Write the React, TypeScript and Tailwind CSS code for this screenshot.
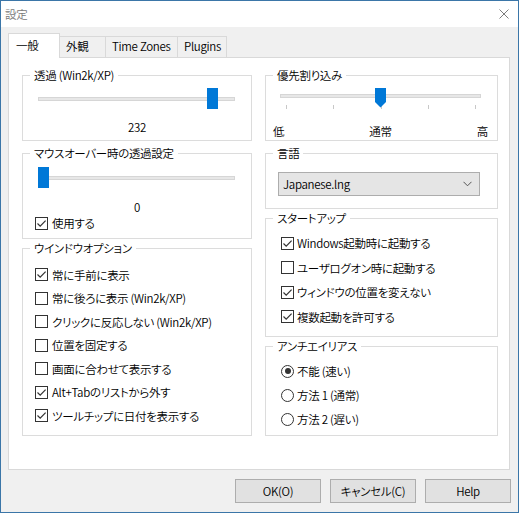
import type { ReactNode } from 'react'

const TABS = [
  { label: '一般', width: 'w-[52px]', active: true },
  { label: '外観', width: 'w-[46px]', active: false },
  { label: 'Time Zones', width: 'w-[72px]', active: false },
  { label: 'Plugins', width: 'w-[49px]', active: false },
]

const WINDOW_OPTIONS = [
  { label: '常に手前に表示', checked: true },
  { label: '常に後ろに表示 (Win2k/XP)', checked: false },
  { label: 'クリックに反応しない (Win2k/XP)', checked: false },
  { label: '位置を固定する', checked: false },
  { label: '画面に合わせて表示する', checked: false },
  { label: 'Alt+Tabのリストから外す', checked: true },
  { label: 'ツールチップに日付を表示する', checked: true },
]

const STARTUP = [
  { label: 'Windows起動時に起動する', checked: true },
  { label: 'ユーザログオン時に起動する', checked: false },
  { label: 'ウィンドウの位置を変えない', checked: true },
  { label: '複数起動を許可する', checked: true },
]

const ANTIALIAS = ['不能 (速い)', '方法 1 (通常)', '方法 2 (遅い)']

function Group({ label, className, children }: { label: string; className: string; children: ReactNode }) {
  return (
    <div className={`relative border border-[#dcdcdc] ${className}`}>
      <span className="absolute -top-[9px] left-[7px] bg-white px-[4px] leading-4">{label}</span>
      {children}
    </div>
  )
}

function CheckBox({ label, checked, gap = 'gap-[4px]' }: { label: string; checked: boolean; gap?: string }) {
  return (
    <div className={`flex items-center ${gap}`}>
      <span className="flex h-[13px] w-[13px] shrink-0 items-center justify-center border border-[#333] bg-white">
        {checked && (
          <svg width="11" height="11" viewBox="0 0 11 11">
            <path d="M1.5 5.5 L4.2 8.2 L9.6 2.6" fill="none" stroke="#333" strokeWidth="1.2" />
          </svg>
        )}
      </span>
      <span className="leading-4">{label}</span>
    </div>
  )
}

function Radio({ label, checked }: { label: string; checked: boolean }) {
  return (
    <div className="flex h-[24px] items-center gap-[3px]">
      <span className="flex h-[13px] w-[13px] items-center justify-center rounded-full border border-[#333] bg-white">
        {checked && <span className="h-[6px] w-[6px] rounded-full bg-[#333]" />}
      </span>
      <span className="leading-4">{label}</span>
    </div>
  )
}

// horizontal trackbar with a flat blue thumb
function Slider({ value, max }: { value: number; max: number }) {
  const trackWidth = 197
  const left = Math.round((value / max) * (trackWidth - 11))
  return (
    <div className="relative h-[21px] w-[197px]">
      <div className="absolute top-[9px] h-[4px] w-full border border-[#d6d6d6] bg-[#e7e7e7]" />
      <div className="absolute top-0 h-[21px] w-[11px] bg-[#0078d7]" style={{ left }} />
    </div>
  )
}

function PrioritySlider({ step }: { step: number }) {
  const ticks = [0, 1, 2, 3, 4].map((i) => 6 + i * 47.25)
  return (
    <div className="relative h-[21px] w-[201px]">
      <div className="absolute top-[6px] h-[4px] w-full border border-[#d6d6d6] bg-[#e7e7e7]" />
      {ticks.map((x) => (
        <div key={x} className="absolute top-[17px] h-[4px] w-px bg-[#c8c8c8]" style={{ left: Math.round(x) }} />
      ))}
      <svg className="absolute top-0" style={{ left: Math.round(ticks[step] - 5.5) }} width="11" height="20" viewBox="0 0 11 20">
        <polygon points="0,0 11,0 11,14 5.5,19.5 0,14" fill="#0078d7" />
      </svg>
    </div>
  )
}

export default function App() {
  return (
    <div className="flex h-[513px] w-[519px] flex-col border border-[#3b76a8] bg-[#f0f0f0] font-['Noto_Sans_CJK_JP',sans-serif] text-[11.5px] font-[350] tracking-[-0.3px] text-black [font-feature-settings:'palt']">
      {/* title bar */}
      <div className="flex h-[26px] items-center justify-between bg-white pl-[4px] pr-[9px]">
        <span className="leading-4 text-[#7a7a7a]">設定</span>
        <svg width="10" height="10" viewBox="0 0 10 10">
          <path d="M0.5 0.5 L9.5 9.5 M9.5 0.5 L0.5 9.5" stroke="#7c7c7c" strokeWidth="1" />
        </svg>
      </div>

      {/* tabs */}
      <div className="ml-[7px] mt-[6px] flex h-[24px] items-end">
        {TABS.map((tab) =>
          tab.active ? (
            <div
              key={tab.label}
              className={`relative z-10 -mb-px flex h-[25px] items-center border border-b-0 border-[#d9d9d9] bg-white pl-[7px] ${tab.width}`}
            >
              {tab.label}
            </div>
          ) : (
            <div
              key={tab.label}
              className={`flex h-[21px] items-center border border-b-0 border-l-0 border-[#d9d9d9] bg-[#f0f0f0] pl-[6px] ${tab.width}`}
            >
              {tab.label}
            </div>
          ),
        )}
      </div>

      {/* tab page */}
      <div className="ml-[7px] flex h-[413px] w-[502px] gap-[13px] border border-[#d9d9d9] bg-white pl-[13px] pt-[17px]">
        <div className="flex w-[230px] flex-col">
          <Group label="透過 (Win2k/XP)" className="h-[66px]">
            <div className="ml-[15px] mt-[12px]">
              <Slider value={232} max={255} />
            </div>
            <div className="mt-[10px] text-center leading-4">232</div>
          </Group>

          <Group label="マウスオーバー時の透過設定" className="mt-[12px] h-[86px]">
            <div className="ml-[15px] mt-[13px]">
              <Slider value={0} max={255} />
            </div>
            <div className="mt-[12px] h-[14px] text-center leading-[14px]">0</div>
            <div className="ml-[12px] mt-px">
              <CheckBox label="使用する" checked />
            </div>
          </Group>

          <Group label="ウインドウオプション" className="mt-[9px] h-[188px]">
            <div className="ml-[12px] mt-[14px] flex flex-col">
              {WINDOW_OPTIONS.map((o) => (
                <div key={o.label} className="flex h-[23.5px] items-center">
                  <CheckBox label={o.label} checked={o.checked} />
                </div>
              ))}
            </div>
          </Group>
        </div>

        <div className="flex w-[233px] flex-col">
          <Group label="優先割り込み" className="h-[66px]">
            <div className="ml-[14px] mt-[12px]">
              <PrioritySlider step={2} />
            </div>
            <div className="mt-[14px] flex justify-between pl-[7px] pr-[9px] leading-4">
              <span>低</span>
              <span>通常</span>
              <span>高</span>
            </div>
          </Group>

          <Group label="言語" className="mt-[12px] h-[56px]">
            <div className="ml-[12px] mt-[18px] flex h-[24px] w-[202px] items-center justify-between border border-[#adadad] bg-[#e5e5e5] pl-[4px] pr-[7px]">
              <span className="leading-4">Japanese.lng</span>
              <svg width="9" height="6" viewBox="0 0 9 6">
                <path d="M0.5 0.8 L4.5 4.8 L8.5 0.8" fill="none" stroke="#555" strokeWidth="1" />
              </svg>
            </div>
          </Group>

          <Group label="スタートアップ" className="mt-[9px] h-[119px]">
            <div className="ml-[15px] mt-[12px] flex flex-col">
              {STARTUP.map((o) => (
                <div key={o.label} className="flex h-[24.5px] items-center">
                  <CheckBox label={o.label} checked={o.checked} gap="gap-[3px]" />
                </div>
              ))}
            </div>
          </Group>

          <Group label="アンチエイリアス" className="mt-[9px] h-[90px]">
            <div className="ml-[15px] mt-[12px] flex flex-col">
              {ANTIALIAS.map((label, i) => (
                <Radio key={label} label={label} checked={i === 0} />
              ))}
            </div>
          </Group>
        </div>
      </div>

      {/* dialog buttons */}
      <div className="mt-[9px] flex justify-end gap-[9px] pr-[7px]">
        {['OK(O)', 'キャンセル(C)', 'Help'].map((label) => (
          <button
            key={label}
            className="flex h-[24px] w-[86px] items-center justify-center border border-[#adadad] bg-[#e1e1e1] leading-4"
          >
            {label}
          </button>
        ))}
      </div>
    </div>
  )
}
